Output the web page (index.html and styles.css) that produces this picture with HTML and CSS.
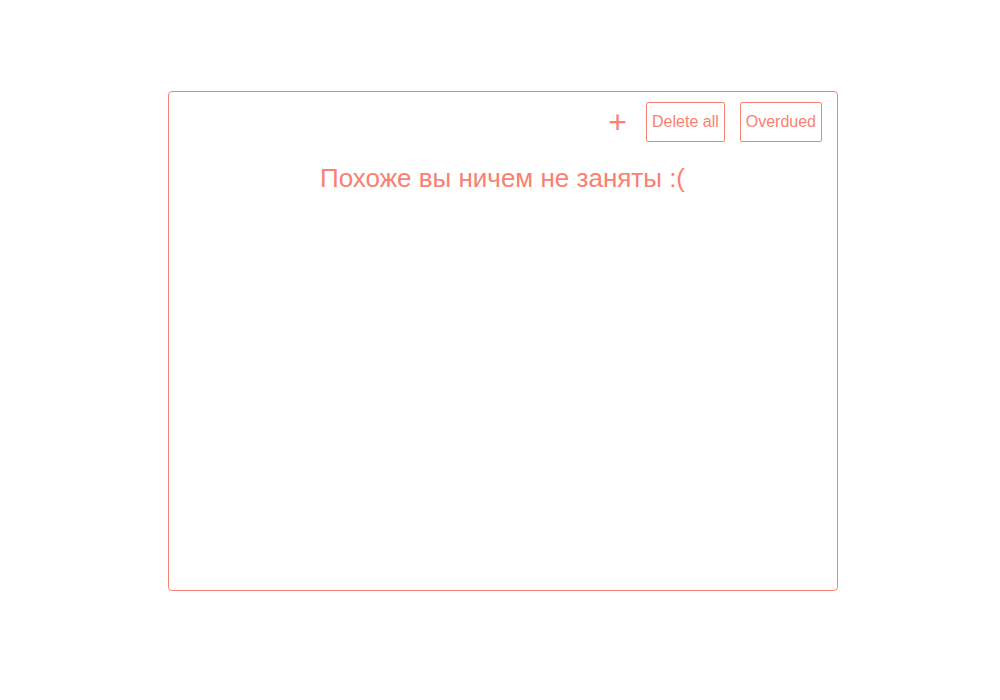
FILE: index.html
```html
<!DOCTYPE html>
<html lang="ru">
<head>
<meta charset="utf-8">
<title>Todo</title>
<link rel="stylesheet" href="styles.css">
</head>
<body>
<div class="board">
  <div class="toolbar">
    <button class="add" type="button">+</button>
    <button class="btn" type="button">Delete all</button>
    <button class="btn" type="button">Overdued</button>
  </div>
  <h2 class="empty">Похоже вы ничем не заняты :(</h2>
</div>
</body>
</html>
```

FILE: styles.css
```css
html, body {
  margin: 0;
  padding: 0;
  background: #ffffff;
}
body {
  font-family: "Liberation Sans", Arial, sans-serif;
  color: #fa8072;
}
.board {
  box-sizing: border-box;
  width: 670px;
  height: 500px;
  margin: 91px 0 0 168px;
  border: 1px solid #fa8072;
  border-radius: 4px;
  padding: 10px 15px 0 14px;
}
.toolbar {
  display: flex;
  justify-content: flex-end;
  align-items: center;
  gap: 15px;
}
.btn {
  font-family: "Liberation Sans", Arial, sans-serif;
  font-size: 16px;
  color: #fa8072;
  background: #ffffff;
  border: 1px solid #fa8072;
  border-radius: 2px;
  padding: 10px 5px;
  margin: 0;
  line-height: 18px;
}
.add {
  font-family: "Liberation Sans", Arial, sans-serif;
  font-size: 32px;
  line-height: 32px;
  color: #fa8072;
  background: none;
  border: none;
  padding: 0;
  margin: 0 4px 0 0;
}
.empty {
  margin: 21px 0 0;
  font-size: 26px;
  font-weight: normal;
  text-align: center;
  color: #fa8072;
}
```
